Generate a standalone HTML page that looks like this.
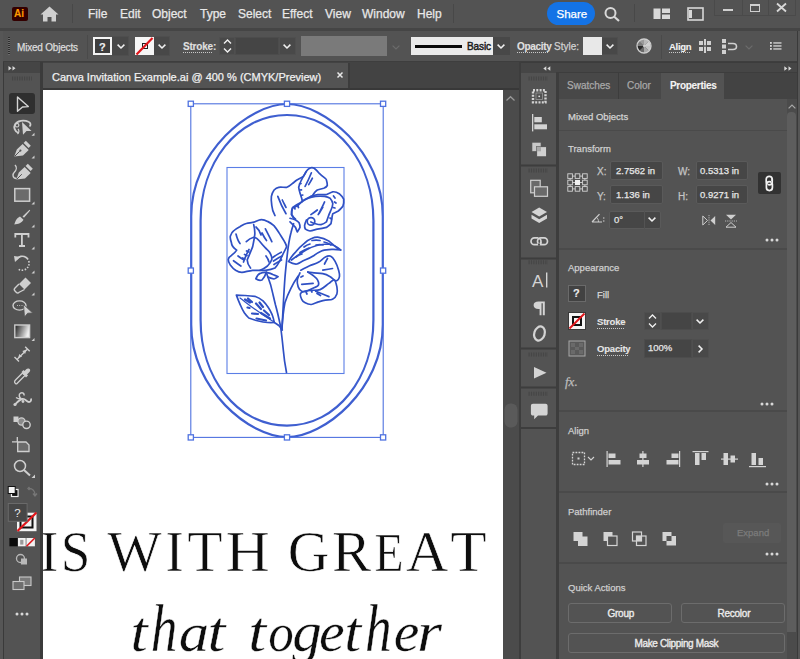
<!DOCTYPE html>
<html><head><meta charset="utf-8">
<style>
*{margin:0;padding:0;box-sizing:border-box}
html,body{width:800px;height:659px;overflow:hidden;background:#535353}
body{position:relative;font-family:"Liberation Sans",sans-serif;color:#e6e6e6}
.a{position:absolute}
.t{position:absolute;white-space:nowrap;line-height:1;-webkit-text-stroke:0.25px currentColor}
.t[style*="bold"]{-webkit-text-stroke:0.1px currentColor}
svg{position:absolute;overflow:visible}
</style></head><body>

<!-- MENU BAR -->
<div class="a" style="left:0;top:0;width:800px;height:28px;background:#535353"></div>
<div class="a" style="left:0;top:28px;width:800px;height:3px;background:#454545"></div>
<!-- Ai logo -->
<div class="a" style="left:12px;top:7px;width:16px;height:14px;background:#330000;border-radius:2px"></div>
<div class="t" style="left:14px;top:9px;font-size:10px;font-weight:bold;color:#ff9a00">Ai</div>
<!-- home -->
<svg style="left:40px;top:6px" width="19" height="16" viewBox="0 0 19 16"><path d="M9.5 0.5 L18.5 8.5 L16 8.5 L16 15.5 L11.5 15.5 L11.5 11 L7.5 11 L7.5 15.5 L3 15.5 L3 8.5 L0.5 8.5 Z" fill="#d0d0d0"/></svg>
<div class="a" style="left:72px;top:4px;width:1px;height:19px;background:#484848"></div>
<div class="t" style="left:88px;top:8px;font-size:12px;color:#e8e8e8">File</div>
<div class="t" style="left:120px;top:8px;font-size:12px;color:#e8e8e8">Edit</div>
<div class="t" style="left:152px;top:8px;font-size:12px;color:#e8e8e8">Object</div>
<div class="t" style="left:200px;top:8px;font-size:12px;color:#e8e8e8">Type</div>
<div class="t" style="left:238px;top:8px;font-size:12px;color:#e8e8e8">Select</div>
<div class="t" style="left:282px;top:8px;font-size:12px;color:#e8e8e8">Effect</div>
<div class="t" style="left:325px;top:8px;font-size:12px;color:#e8e8e8">View</div>
<div class="t" style="left:362px;top:8px;font-size:12px;color:#e8e8e8">Window</div>
<div class="t" style="left:417px;top:8px;font-size:12px;color:#e8e8e8">Help</div>
<div class="a" style="left:453px;top:4px;width:1px;height:19px;background:#484848"></div>
<!-- share -->
<div class="a" style="left:547px;top:2px;width:48px;height:23px;background:#1473e6;border-radius:12px"></div>
<div class="t" style="left:556.5px;top:8.5px;font-size:11.5px;color:#fff">Share</div>
<!-- search -->
<svg style="left:604px;top:7px" width="17" height="15" viewBox="0 0 17 15"><circle cx="6.5" cy="6" r="5" fill="none" stroke="#d8d8d8" stroke-width="2"/><path d="M10 9.5 L15 14" stroke="#d8d8d8" stroke-width="2.2"/></svg>
<div class="a" style="left:634px;top:4px;width:1px;height:18px;background:#484848"></div>
<!-- workspace icon -->
<svg style="left:653px;top:8px" width="18" height="12" viewBox="0 0 18 12"><rect x="0.5" y="0.5" width="7" height="10.5" fill="#d8d8d8"/><rect x="9" y="0.5" width="8" height="4.5" fill="#d8d8d8"/><rect x="9" y="6.5" width="8" height="4.5" fill="#d8d8d8"/></svg>
<svg style="left:687px;top:7px" width="17" height="14" viewBox="0 0 17 14"><rect x="1" y="1" width="15" height="12" fill="none" stroke="#d8d8d8" stroke-width="1.6"/><rect x="2" y="3" width="3" height="8" fill="#d8d8d8"/></svg>
<!-- window controls -->
<div class="a" style="left:714px;top:-1px;width:82px;height:17px;border:1px solid #4a4a4a"></div>
<div class="a" style="left:742px;top:0;width:1px;height:16px;background:#4a4a4a"></div>
<div class="a" style="left:768px;top:0;width:1px;height:16px;background:#4a4a4a"></div>
<div class="a" style="left:723px;top:9px;width:10px;height:2px;background:#d0d0d0"></div>
<div class="a" style="left:750px;top:4px;width:10px;height:8px;border:1.5px solid #d0d0d0;border-top-width:2px"></div>
<svg style="left:776px;top:3px" width="11" height="9" viewBox="0 0 11 9"><path d="M1 0.5 L10 8.5 M10 0.5 L1 8.5" stroke="#d8d8d8" stroke-width="1.8"/></svg>

<!-- CONTROL BAR -->
<div class="a" style="left:3px;top:31px;width:797px;height:31px;background:#535353"></div>
<div class="a" style="left:0;top:31px;width:3px;height:628px;background:#565656"></div>
<!-- grip -->
<div class="a" style="left:8px;top:37px;width:2px;height:18px;background:repeating-linear-gradient(#2e2e2e 0 1px,#6a6a6a 1px 2px)"></div>
<div class="t" style="left:17px;top:43px;font-size:10px;color:#dcdcdc;letter-spacing:-0.2px">Mixed Objects</div>
<div class="a" style="left:87px;top:35px;width:1px;height:24px;background:#4a4a4a"></div>
<!-- fill swatch -->
<div class="a" style="left:93px;top:37px;width:19px;height:18px;border:2px solid #f4f4f4;background:#3e3e3e"></div>
<div class="t" style="left:99px;top:42px;font-size:11px;font-weight:bold;color:#f0f0f0">?</div>
<div class="a" style="left:112px;top:36px;width:17px;height:20px;background:#484848;border:1px solid #4e4e4e;border-left:0"></div>
<svg style="left:117px;top:44px" width="8" height="5" viewBox="0 0 8 5"><path d="M0.6 0.6 L4 4 L7.4 0.6" fill="none" stroke="#f0f0f0" stroke-width="1.5"/></svg>
<!-- stroke swatch -->
<div class="a" style="left:135px;top:37px;width:19px;height:18px;background:#f6f6f6"></div>
<div class="a" style="left:142px;top:43px;width:6px;height:6px;border:1.5px solid #222"></div>
<svg style="left:135px;top:37px" width="19" height="18" viewBox="0 0 19 18"><path d="M1.5 17.5 L17.5 1" stroke="#e0161b" stroke-width="2.2"/></svg>
<div class="a" style="left:154px;top:36px;width:16px;height:20px;background:#484848;border:1px solid #4e4e4e;border-left:0"></div>
<svg style="left:158px;top:44px" width="8" height="5" viewBox="0 0 8 5"><path d="M0.6 0.6 L4 4 L7.4 0.6" fill="none" stroke="#f0f0f0" stroke-width="1.5"/></svg>
<!-- Stroke: -->
<div class="t" style="left:183px;top:42px;font-size:10px;font-weight:bold;color:#e0e0e0;letter-spacing:-0.2px">Stroke:</div>
<div class="a" style="left:183px;top:52px;width:30px;height:1px;background:repeating-linear-gradient(90deg,#c8c8c8 0 1px,transparent 1px 2px)"></div>
<div class="a" style="left:219px;top:37px;width:16px;height:18px;background:#494949;border:1px solid #4f4f4f"></div>
<svg style="left:223px;top:39px" width="9" height="14" viewBox="0 0 9 14"><path d="M1 4.5 L4.5 1 L8 4.5 M1 9.5 L4.5 13 L8 9.5" fill="none" stroke="#f0f0f0" stroke-width="1.4"/></svg>
<div class="a" style="left:235px;top:37px;width:44px;height:18px;background:#454545;border:1px solid #4c4c4c"></div>
<div class="a" style="left:279px;top:37px;width:17px;height:18px;background:#494949;border:1px solid #4f4f4f"></div>
<svg style="left:283px;top:44px" width="8" height="5" viewBox="0 0 8 5"><path d="M0.6 0.6 L4 4 L7.4 0.6" fill="none" stroke="#f0f0f0" stroke-width="1.5"/></svg>
<!-- profile disabled -->
<div class="a" style="left:301px;top:36px;width:86px;height:20px;background:#7a7a7a"></div>
<svg style="left:392px;top:45px" width="8" height="5" viewBox="0 0 8 5"><path d="M0.6 0.6 L4 4 L7.4 0.6" fill="none" stroke="#6c6c6c" stroke-width="1.2"/></svg>
<!-- brush -->
<div class="a" style="left:411px;top:37px;width:82px;height:18px;background:#ebebeb"></div>
<div class="a" style="left:415px;top:45px;width:47px;height:3px;background:#0a0a0a"></div>
<div class="t" style="left:467px;top:42px;font-size:10px;color:#1c1c1c;-webkit-text-stroke:0.45px #1c1c1c;letter-spacing:-0.1px">Basic</div>
<div class="a" style="left:493px;top:37px;width:17px;height:18px;background:#484848"></div>
<svg style="left:497px;top:44px" width="8" height="5" viewBox="0 0 8 5"><path d="M0.6 0.6 L4 4 L7.4 0.6" fill="none" stroke="#f0f0f0" stroke-width="1.5"/></svg>
<div class="t" style="left:517px;top:42px;font-size:10px;font-weight:bold;color:#e0e0e0;letter-spacing:-0.3px">Opacity</div>
<div class="a" style="left:517px;top:52px;width:32px;height:1px;background:repeating-linear-gradient(90deg,#c8c8c8 0 1px,transparent 1px 2px)"></div>
<div class="t" style="left:554px;top:42px;font-size:10px;color:#d0d0d0">Style:</div>
<div class="a" style="left:583px;top:37px;width:19px;height:18px;background:#e8e8e8"></div>
<div class="a" style="left:602px;top:37px;width:16px;height:18px;background:#484848;border:1px solid #4e4e4e;border-left:0"></div>
<svg style="left:606px;top:44px" width="8" height="5" viewBox="0 0 8 5"><path d="M0.6 0.6 L4 4 L7.4 0.6" fill="none" stroke="#f0f0f0" stroke-width="1.5"/></svg>
<!-- recolor wheel -->
<svg style="left:635.5px;top:37.5px" width="16" height="16" viewBox="0 0 16 16"><path d="M8 8 L8.00 1.20 A6.8 6.8 0 0 1 12.81 3.19 Z" fill="#b8b8b8"/><path d="M8 8 L12.81 3.19 A6.8 6.8 0 0 1 14.80 8.00 Z" fill="#d0d0d0"/><path d="M8 8 L14.80 8.00 A6.8 6.8 0 0 1 12.81 12.81 Z" fill="#c4c4c4"/><path d="M8 8 L12.81 12.81 A6.8 6.8 0 0 1 8.00 14.80 Z" fill="#a8a8a8"/><path d="M8 8 L8.00 14.80 A6.8 6.8 0 0 1 3.19 12.81 Z" fill="#6a6a6a"/><path d="M8 8 L3.19 12.81 A6.8 6.8 0 0 1 1.20 8.00 Z" fill="#2a2a2a"/><path d="M8 8 L1.20 8.00 A6.8 6.8 0 0 1 3.19 3.19 Z" fill="#7a7a7a"/><path d="M8 8 L3.19 3.19 A6.8 6.8 0 0 1 8.00 1.20 Z" fill="#9a9a9a"/><circle cx="8" cy="8" r="7" fill="none" stroke="#cfcfcf" stroke-width="1.3"/><circle cx="8" cy="8" r="1" fill="#ddd"/></svg>
<div class="a" style="left:661px;top:35px;width:1px;height:24px;background:#4a4a4a"></div>
<div class="t" style="left:669px;top:42px;font-size:9.5px;font-weight:bold;color:#f2f2f2;letter-spacing:-0.3px">Align</div>
<div class="a" style="left:669px;top:52px;width:21px;height:1px;background:repeating-linear-gradient(90deg,#c8c8c8 0 1px,transparent 1px 2px)"></div>
<svg style="left:698px;top:39px" width="14" height="14" viewBox="0 0 14 14"><g fill="#d0d0d0"><rect x="6" y="0" width="2" height="14"/><rect x="1" y="2" width="4" height="4"/><rect x="9" y="2" width="4" height="4"/><rect x="1" y="8" width="4" height="4"/><rect x="9" y="8" width="4" height="4"/></g><rect x="0" y="6.3" width="14" height="1.4" fill="#535353"/></svg>
<svg style="left:722px;top:39px" width="16" height="15" viewBox="0 0 16 15"><g fill="#d0d0d0"><rect x="0" y="0" width="4" height="4"/><rect x="0" y="5.5" width="4" height="4"/><rect x="0" y="11" width="4" height="4"/></g><path d="M6 4.5 L11 4.5 Q14.5 4.5 14.5 7.5 Q14.5 10.5 11 10.5 L6 10.5" fill="none" stroke="#d0d0d0" stroke-width="1.6"/></svg>
<svg style="left:745px;top:45px" width="8" height="5" viewBox="0 0 8 5"><path d="M0.6 0.6 L4 4 L7.4 0.6" fill="none" stroke="#6c6c6c" stroke-width="1.2"/></svg>
<svg style="left:770px;top:41px" width="12" height="11" viewBox="0 0 12 11"><g fill="#d8d8d8"><rect x="0" y="1" width="1.8" height="1.8"/><rect x="0" y="4" width="1.8" height="1.8"/><rect x="0" y="7" width="1.8" height="1.8"/><rect x="3.3" y="1.3" width="8.2" height="1.3"/><rect x="3.3" y="4.3" width="8.2" height="1.3"/><rect x="3.3" y="7.3" width="8.2" height="1.3"/></g></svg>

<!-- LEFT TOOLBAR -->
<div class="a" style="left:3px;top:61px;width:794px;height:2px;background:#3e3e3e"></div>
<div class="a" style="left:3px;top:62px;width:1px;height:597px;background:#3a3a3a"></div>
<div class="a" style="left:4px;top:62px;width:36px;height:11px;background:#454545"></div>
<div class="a" style="left:4px;top:73px;width:36px;height:586px;background:#535353"></div>
<div class="a" style="left:40px;top:62px;width:3px;height:597px;background:#3b3b3b"></div>


<!-- TOOLBAR ICONS -->
<svg style="left:0;top:0" width="43" height="659" viewBox="0 0 43 659">
<g fill="none" stroke="#cdcdcd" stroke-width="1.4" stroke-linejoin="round" stroke-linecap="round">
</g>
<!-- header >> -->
<path d="M8.5 66 L11.5 68.3 L8.5 70.6 Z M12.5 66 L15.5 68.3 L12.5 70.6 Z" fill="#d8d8d8"/>
<path d="M12 78.6 H32" stroke="#464646" stroke-width="4" stroke-dasharray="1.2 1.2"/>
<!-- selection -->
<rect x="9" y="93" width="26" height="21" rx="3" fill="#2f2f2f"/>
<path d="M17.5 97 L28.3 106.6 L22.5 107 L17.5 111.3 Z" fill="none" stroke="#d4d4d4" stroke-width="1.4" stroke-linejoin="round"/>
<!-- lasso -->
<path d="M18.5 133 C14.5 131.5 13.5 127 15 124.5 C17 120.5 24 119.5 28.5 121.8 C31 123 31 125.5 29.5 126.5" fill="none" stroke="#cfcfcf" stroke-width="1.8"/>
<path d="M17 127 a1.8 1.8 0 1 1 0.1 0 M18 129 C19.5 130.5 19 133 17.5 134" fill="none" stroke="#cfcfcf" stroke-width="1.2"/>
<path d="M22 122 L31.5 131 L26.5 131 L23 134.8 Z" fill="#d0d0d0"/>
<path d="M34.5 132.8 V135.8 H31.5 Z" fill="#d0d0d0"/>
<!-- pen -->
<path d="M14.3 156.6 L16.8 149.5 L22.6 143.9 L28.7 150 L23 155.4 Z" fill="#cfcfcf"/>
<path d="M23.6 143 L25.8 140.8 L30.8 145.8 L28.6 148 Z" fill="#cfcfcf"/>
<path d="M14.8 156.2 L19.8 151.2" stroke="#535353" stroke-width="1"/>
<circle cx="20.4" cy="150.6" r="1.1" fill="#535353"/>
<path d="M34.5 155.5 V158.5 H31.5 Z" fill="#d0d0d0"/>
<!-- curvature -->
<path d="M16.3 179.6 L18.8 172.5 L24.6 166.9 L30.7 173 L25 178.4 Z" fill="#cfcfcf"/>
<path d="M25.6 166 L27.8 163.8 L32.8 168.8 L30.6 171 Z" fill="#cfcfcf"/>
<path d="M16.8 179.2 L21.8 174.2" stroke="#535353" stroke-width="1"/>
<path d="M16.5 178.5 C12 178 12.5 174 14.5 172 C16.5 170 17 167 15 165" fill="none" stroke="#cfcfcf" stroke-width="1.4"/>
<!-- rectangle -->
<rect x="14.8" y="188.6" width="14.8" height="12.6" fill="#6b6b6b" stroke="#cdcdcd" stroke-width="1.5"/>
<path d="M34.5 201.5 V204.5 H31.5 Z" fill="#d0d0d0"/>
<!-- brush -->
<path d="M22.5 216.5 L29.5 209.8 L30.2 210.5 L24 217.8 Z" fill="#cfcfcf"/>
<path d="M14.3 224.5 C15.5 221 16.5 218 20 216.5 L23.5 219.8 C22 223 18 224.3 14.3 224.5 Z" fill="#cfcfcf"/>
<path d="M34.5 224.5 V227.5 H31.5 Z" fill="#d0d0d0"/>
<!-- type -->
<path d="M15.3 237.5 V234 H28.5 V237.5 M21.9 234 V246 M19 246 H25" fill="none" stroke="#d0d0d0" stroke-width="1.8"/>
<path d="M34.5 246.5 V249.5 H31.5 Z" fill="#d0d0d0"/>
<!-- rotate -->
<path d="M16.2 259.5 A7 7 0 1 1 17.5 268.5" fill="none" stroke="#cfcfcf" stroke-width="1.6" stroke-dasharray="14 1.5 1.5 1.5 1.5 1.5 1.5 1.5 1.5 1.5 1.5 1.5 1.5 1.5"/>
<path d="M14 256 L20.5 257 L15 262 Z" fill="#cfcfcf"/>
<path d="M34.5 270.5 V273.5 H31.5 Z" fill="#d0d0d0"/>
<!-- eraser -->
<path d="M21.5 281.5 L25.5 277.5 L31 283 L24.5 289.5 L19 284 Z" fill="#cfcfcf"/>
<path d="M19 284 L15 288 C14 289 14 290 15 291 L16.2 292.2 C17.2 293.2 18.2 293.2 19.2 292.2 L24.5 289.5" fill="none" stroke="#cfcfcf" stroke-width="1.4"/>
<path d="M34.5 292.5 V295.5 H31.5 Z" fill="#d0d0d0"/>
<!-- shape builder -->
<ellipse cx="19.5" cy="305.5" rx="6.5" ry="4.6" fill="none" stroke="#cfcfcf" stroke-width="1.4"/>
<path d="M17 305.5 h0.8 M19.3 305.5 h0.8 M21.6 305.5 h0.8" stroke="#cfcfcf" stroke-width="1.2"/>
<path d="M23.5 304.5 L32.7 313 L27.7 313.2 L24.5 317 Z" fill="#d0d0d0" stroke="#535353" stroke-width="0.8"/>
<!-- gradient -->
<defs><linearGradient id="gr" x1="0" y1="0" x2="1" y2="0.3"><stop offset="0" stop-color="#1a1a1a"/><stop offset="1" stop-color="#f0f0f0"/></linearGradient></defs>
<rect x="14.8" y="325" width="14.8" height="12.6" fill="url(#gr)" stroke="#cdcdcd" stroke-width="1.4"/>
<path d="M34.5 338 V341 H31.5 Z" fill="#d0d0d0"/>
<!-- width -->
<path d="M14.5 357 L19 361.5 M25.2 346.8 L29.7 351.3 M17.5 359 L27.5 349" stroke="#cfcfcf" stroke-width="1.4"/>
<path d="M18.2 357.8 L22.1 356.7 L19.3 353.9 Z M26.5 349.6 L25.1 353.9 L22.3 351.1 Z" fill="#cfcfcf"/>
<!-- eyedropper -->
<path d="M15.5 383.5 C14 382.5 14.5 381 15.5 380 L22.5 373 L25 375.5 L18 382.5 C17 383.5 16.5 384.5 15.5 383.5 Z" fill="none" stroke="#cfcfcf" stroke-width="1.3"/>
<path d="M21.5 372 L23.5 370 L24.5 371 L26.5 369 C27.5 368 29.5 368.5 30 369.5 C30.5 370.5 30 371.5 29 372.5 L27 374.5 L28 375.5 L26 377.5 Z" fill="#cfcfcf"/>
<!-- puppet warp -->
<path d="M15 404.5 C17.5 402 19.5 399.5 22.5 399 C25.5 398.5 26.5 402 29 402 C30.5 402 31.5 400.5 31 398.5" fill="none" stroke="#cfcfcf" stroke-width="1.8"/>
<path d="M21.5 399 C19 397.5 18.5 394.5 20.5 393.2 C22.5 392 24.5 393.5 24 395.5 M16 397.5 C17.5 398.5 19 399 20.5 399" fill="none" stroke="#cfcfcf" stroke-width="1.5"/>
<circle cx="15" cy="404.5" r="1.6" fill="#cfcfcf"/><circle cx="23" cy="401.5" r="1.4" fill="#cfcfcf"/>
<!-- symbol -->
<rect x="13.5" y="416.5" width="5" height="5.5" fill="#cfcfcf"/>
<circle cx="21.5" cy="421.5" r="3.6" fill="#8a8a8a" stroke="#cfcfcf" stroke-width="1.2"/>
<circle cx="26.5" cy="424.8" r="3.7" fill="#535353" stroke="#cfcfcf" stroke-width="1.4"/>
<!-- artboard -->
<path d="M12 441.8 H17.5 M17.3 437 V442" stroke="#cfcfcf" stroke-width="1.3"/>
<path d="M17.7 442 H26 L29 445 V451.5 H17.7 Z" fill="#6b6b6b" stroke="#cfcfcf" stroke-width="1.3"/>
<!-- zoom -->
<circle cx="20" cy="466" r="5.5" fill="none" stroke="#cfcfcf" stroke-width="1.5"/>
<path d="M24 470 L30 475.5" stroke="#cfcfcf" stroke-width="2"/>
<path d="M35 474.5 V478 H31.5 Z" fill="#d0d0d0"/>
<!-- default fill stroke -->
<rect x="11.5" y="489.5" width="6.5" height="7" fill="none" stroke="#f0f0f0" stroke-width="1.2"/>
<rect x="12.3" y="490.3" width="5" height="5.5" fill="#111"/>
<rect x="8.2" y="486.5" width="7" height="7" fill="#f4f4f4" stroke="#111" stroke-width="1"/>
<path d="M29 488.5 C32.5 488.5 35 491 35 495 M33 493.5 L35 496 L37 493.5 M29.5 487 L28 488.5 L29.5 490" fill="none" stroke="#777" stroke-width="1.3"/>
<!-- fill/stroke big -->
<rect x="17" y="512.7" width="19.5" height="18.5" fill="#f4f4f4"/>
<rect x="20.5" y="516.5" width="12" height="11" fill="none" stroke="#111" stroke-width="2"/>
<path d="M17.5 531 L36.5 512.5" stroke="#e0161b" stroke-width="2.3"/>
<rect x="8.3" y="503.5" width="18.8" height="17.8" fill="#474747" stroke="#6a6a6a" stroke-width="1"/>
<text x="14.3" y="517.3" font-family="Liberation Sans" font-size="11.5" fill="#ececec">?</text>
<!-- color modes -->
<rect x="9.4" y="538" width="8.5" height="8.3" fill="#0c0c0c"/>
<rect x="17.9" y="538" width="7.8" height="8.3" fill="#f2f2f2"/>
<rect x="20.2" y="539.8" width="3.2" height="4.8" fill="#9a9a9a"/>
<rect x="26.4" y="538" width="8.5" height="8.3" fill="#f2f2f2"/>
<path d="M26.6 546.2 L34.8 538" stroke="#e0161b" stroke-width="1.6"/>
<!-- draw mode -->
<circle cx="20.5" cy="558.5" r="4" fill="none" stroke="#b8b8b8" stroke-width="1.3"/>
<rect x="21" y="558.5" width="6" height="6" fill="#b8b8b8"/>
<!-- screen mode -->
<rect x="19.5" y="577" width="11.5" height="8.5" fill="#7a7a7a" stroke="#c8c8c8" stroke-width="1.1"/>
<rect x="13" y="581.5" width="11" height="8" fill="#6e6e6e" stroke="#c8c8c8" stroke-width="1.1"/>
<!-- more -->
<circle cx="17" cy="614" r="1.5" fill="#d8d8d8"/><circle cx="22" cy="614" r="1.5" fill="#d8d8d8"/><circle cx="27" cy="614" r="1.5" fill="#d8d8d8"/>
</svg>

<!-- DOC TAB BAR -->
<div class="a" style="left:43px;top:62px;width:477px;height:28px;background:#434343"></div>
<div class="a" style="left:43px;top:63px;width:305px;height:25px;background:#535353"></div>
<div class="a" style="left:348px;top:63px;width:2px;height:25px;background:#3c3c3c"></div>
<div class="a" style="left:43px;top:88px;width:477px;height:2px;background:#383838"></div>
<div class="t" style="left:52px;top:72px;font-size:11px;color:#f0f0f0">Canva Invitation Example.ai @ 400 % (CMYK/Preview)</div>
<svg style="left:337px;top:72px" width="6" height="6" viewBox="0 0 6 6"><path d="M0.5 0.5 L5.5 5.5 M5.5 0.5 L0.5 5.5" stroke="#e8e8e8" stroke-width="1.5"/></svg>

<!-- CANVAS -->
<div class="a" style="left:43px;top:90px;width:460px;height:569px;background:#ffffff"></div>

<!-- ARTWORK -->
<div class="a" style="left:43px;top:90px;width:460px;height:569px;overflow:hidden">
<svg style="left:-43px;top:-90px" width="800" height="659" viewBox="0 0 800 659">
<g fill="none" stroke="#3f5fd0" stroke-width="2.2">
<path d="M287 104 C250.3 104 191.2 151.4 191.2 216.2 L191.2 324.8 C191.2 389.8 250.3 437.2 287 437.2 C323.7 437.2 382.8 389.8 382.8 324.8 L382.8 216.2 C382.8 151.4 323.7 104 287 104 Z"/>
<path d="M287 115 C236.7 115 200.6 163.4 200.6 220.7 L200.6 319.9 C200.6 377.2 236.7 425.6 287 425.6 C337.3 425.6 373.4 377.2 373.4 319.9 L373.4 220.7 C373.4 163.4 337.3 115 287 115 Z"/>
</g>
<rect x="227" y="167.5" width="117" height="206" fill="none" stroke="#5b7ee6" stroke-width="1.1"/>
<g fill="none" stroke="#2f50c4" stroke-width="1.7" stroke-linejoin="round" stroke-linecap="round">
<!-- upper flower outer big petal -->
<path d="M275 215.6 C273 212 272 208.5 271.8 205.5 C271.2 202 271 199 271.4 196.4 C272 193.5 273 191.5 274.1 190 C275.5 188.5 277 187.6 278.7 187.3 C281.5 187 284 187.5 286.9 187.3 C289 186.5 290.8 185 292.3 183.7 C294 182.3 295.5 181 296.9 180 C299 178.8 301.5 177.8 303.3 176.4 C304.5 175 305.2 173.3 306 171.8 C307 170.3 308.2 169 309.6 168.2 C311 167.6 312.8 167.6 314.2 168.2 C316 169.5 318 171.8 319.6 173.7 C321.5 175.5 323.5 177 325 178.2 C326 179 326.5 179.6 326.4 180 C327 182 327.5 184 327.3 185.5 C326.5 187 325 187.8 323.7 188.2 C321.5 188.8 319.3 189.4 317.3 190 C315.8 191 314.5 192.5 313.7 193.7 C313 194.8 312.4 195.6 311.9 196.4"/>
<path d="M306 171.8 C304.5 174.5 302.8 177.3 301.4 180 C300.2 182.5 299.2 185 298.7 187.3 C299 190 299.8 192.3 300.5 194.6 C301.2 196.8 302 199 302.3 201 C300.8 202.8 299.3 204.3 297.8 205.5 C296 206.6 294 207.4 292.3 208.3 C291.5 210.5 291.2 212.5 291.4 214.6 C292.3 216.5 293.5 218 295.1 219.2"/>
<path d="M311.4 172.8 C309.5 177.5 307.5 182 305.1 186.4 M312.4 178.2 C311.3 180.5 310 182.6 308.7 184.6 M277.8 196.4 C280 202.5 282.8 208.3 286 213.7 M282.3 200 C283.5 202.5 284.8 205 286 207.4 M299.5 184 L301 183.5 M299.8 190 L301.5 189.8 M301 195.5 L302.8 195 M294.5 207 L295 209 M297.5 205.5 L298.5 207.5"/>
<!-- upper right petal -->
<path d="M302.3 201 C305 199.5 307.8 197.8 310.5 196.4 C313 195.4 315.5 194.8 317.8 194.6 C320.5 194.5 323.5 194.6 326.4 194.6 C328.5 193.6 330.7 192.5 332.8 191.8 C335 191.6 337.2 192.3 339.2 193.7 C341 195.3 342.8 197.2 343.7 199.1 C344 201.5 343.6 204 342.8 206.4 C341.5 208 340 209.6 338.3 211 C336.5 212 334.5 213 332.8 213.7 C332.3 215.2 332 216.8 331.9 218.3 C331.6 220 331.3 222 331 223.7 C329.8 225 328.2 226.4 326.4 227.4 C323.5 228.2 320.3 228.8 317.3 229.2 C314.8 229.8 312.3 230.6 310 231 C308.3 230.8 306.7 230.2 305.5 229.2 C304.8 228 304.5 226.8 304.6 225.5 C305 223.5 305.6 221.7 306.4 220"/>
<path d="M301.8 201.9 C303.8 200.5 306 199.2 308.2 198.2 C310.5 197.3 313 196.7 315.5 196.4 C318.5 196.2 321.5 196.2 324.6 196.4 C326.5 196.8 328.5 197.4 330.1 198.2 C331.5 199.8 332.5 201.8 332.8 203.7 C332.6 206 331.9 208 331 210 C330 212.2 329 214.3 328.3 216.4 C327.7 218.2 327 220.2 326.4 221.9 C324.8 223.2 323 224.2 321 224.6 C319.2 224.6 317.3 224.3 315.5 223.7 C314 223.2 312.4 222.6 310.9 221.9"/>
<path d="M301.8 201.9 C298.5 203.5 295.3 205.3 292.7 207.3 C292 209.7 291.7 212.2 291.8 214.6 C292.8 216.3 294 217.8 295.5 219.2"/>
<circle cx="311" cy="221.4" r="3.8"/>
<path d="M324.6 201.9 C322.5 206.2 320.5 210.4 318.2 214.6 M322.8 207.3 C321.5 209.5 320.3 211.5 319.1 213.7 M317.3 210 C315 211.8 313 213.2 310.9 214.6 M333.5 196 L335 198 M334.5 202 L336 203 M333.2 207.5 L335 208 M330 218 L331.5 219"/>
<!-- upper sepal -->
<path d="M290 218.3 C292 218.8 293.8 219.3 295.5 220 C297 220.8 298.3 221.8 299.1 222.8 C299.8 224.3 300.1 225.8 300 227.4 C299.2 229 298.3 230.5 297.3 231.9 C296.6 230.3 296 228.8 295.5 227.4 C293.8 225.6 291.9 223.7 290 221.9"/>
<!-- left flower outer -->
<path d="M236.7 250.1 C233.5 248 231.5 245 231.4 242.6 C230.5 240 230 238 230.3 236.3 C231 234 232 232 233.5 231 C235.5 229 237.5 228 239.9 226.7 C242 225.5 244 224 246.3 223.5 C248.5 223 250.5 222.8 252.6 222.4 C255 222 257.5 220.5 260.1 219.8 C262.5 219.5 265 220 267.5 221.4 C270 222.5 272 224 273.9 225.6 C276 228 277.5 230.5 279.2 233.1 C281 236 283 239 284.5 241.6 C285.5 243.5 286.5 245 286.6 246.9 C285.5 249.5 283.5 252.5 282.4 255.4 C281 258 280.5 260 279.2 261.8 C278 264 276.5 266.5 274.9 268.1 C272 269.5 268.5 270 265.4 270.3 C261 270.5 257 270.2 252.6 270.3 C249 270.8 245 272 242 272.4 C239.5 272.5 237.5 271.5 235.6 270.3 C233 268.5 231.5 266.5 230.3 264.9 C229 263 228.2 261.5 228.2 259.6 C228.5 257.5 229.5 256.5 231.4 255.4 C233.5 254 235.5 252 236.7 250.1 Z"/>
<path d="M246.3 241.6 C248.5 239.5 251 238 253.7 237.3 C255.5 237.2 257.5 238.5 259 240.5 C261 243 263 245.5 265.4 247.9 C267 249.5 268.5 250.5 269.6 252.2 C271 254.5 272 257 271.8 259.6 C271 262 269.5 264 267.5 266 C265 268 262.5 269.5 260.1 270.3"/>
<path d="M253.7 224.6 C254.5 228 255 231 254.8 234.1 C254.5 238 253.5 242.5 252.6 246.9 C251 251 249 255.5 247.3 259.6 C247 262.5 248.5 265.5 250.5 268.1"/>
<path d="M233.5 260.7 C236 262.5 238.5 264.5 240.9 266 M238 256 C240 257.5 242 259 244 260 M243.5 262 C245 258 247 253 249 249.5 M242.5 258 L245 259 M244.5 254.5 L247 255.5 M246.5 251 L249 252 M265.4 228.8 C267.5 233 270 237.5 271.8 241.6 M262 233 C263.5 236 265 238.5 266.5 240.5 M266 256 C267.5 258 268.5 260 269 262 M272.8 257.5 C275.5 255.5 278.5 253.5 281.3 252.2 M273.5 261 C276.5 259 279.5 257 282 256 M274 264.5 C277 262.5 279.5 261 281.5 260 M236 234 C237 238 238 241 240 243.5 M256 227 C258.5 229 260 232 261 235"/>
<!-- left sepals -->
<path d="M255.8 278.8 C257 276 258.5 274 260.1 273.4 C262 272.5 264.5 272.2 266.4 272.4 C265.5 275 264 278 262 280 C260 280.8 257.5 280 255.8 278.8 Z"/>
<path d="M266.4 272.4 C269 273 271 273.5 272.8 274.5 C275 275.5 277 276 278.1 276.7 C276.5 278 275 279 274 279 C271.5 278.5 269.5 277.8 268 277"/>
<!-- stems -->
<path d="M293.6 223.7 C292.5 227 291.6 230 290.9 233 C289 240 288 248 287.3 254.3 C286.5 262 285.5 270 284.9 278.5 C284 290 283 310 282 329"/>
<path d="M266.4 272.4 C267.5 276 269 280 270.7 285.1 C272.5 292 274 299 275.5 305 C277.5 312 279 319 280.5 326 C281.5 333 282.5 342 283.3 350 C284 358 285 365 286.5 372.5"/>
<path d="M298.2 276.1 C295.5 280 293 284 290.9 288.3 C288.5 293 286.5 298 284.9 302.8 C283.5 310 282.5 320 281.8 329"/>
<!-- upper right leaf -->
<path d="M288.5 261.6 C290.5 258 293 254.5 295.8 251.8 C298.5 248.5 301.5 245.5 304.3 243.3 C306.5 241 309 239.5 311.6 238.5 C314 237.5 316.5 237 318.8 237.3 C322 237.7 325.5 239 328.5 240.9 C330.5 242.5 332.5 244 334.6 245.8 C336.5 247.5 338.5 249 340.7 250 C338 249.6 335 249.3 332.2 249.4 C329 249.6 325.5 249.8 322.5 250.6 C319.5 252 316.5 253.5 314 255.5 C311 257.5 307.5 259 304.3 260.3 C301.5 261.5 299.5 263 297 264 C294 264.5 291 263 288.5 261.6 Z"/>
<path d="M291.5 260 C296 256.5 301 253 306 250 C313 246 320 244 328 244 C333 244.5 337 246.5 340.7 250"/>
<path d="M304 247 C306 245.5 308 244.5 310 244 M300 252.5 C303 250.5 306 249 309 248 M312 240.5 C315 240 317.5 240 320 240.5 M316 245 C318.5 244.5 321 244.5 323 245 M324 242 C326.5 242.5 329 243.5 331 245 M296 257 C298 255.5 300 254.5 302 254"/>
<!-- lower right flower -->
<path d="M300.8 270.2 C302.3 269.5 306.7 267.1 309.6 265.8 C312.5 264.5 315.8 263.8 318.4 262.3 C321.0 260.8 323.3 258.0 325.4 257.0 C327.4 256.0 329.1 255.5 330.7 256.2 C332.3 256.9 333.8 259.1 335.1 261.4 C336.4 263.7 337.9 267.7 338.6 270.2 C339.3 272.7 339.9 274.6 339.5 276.4 C339.1 278.2 337.6 280.8 336.0 280.8 C334.4 280.8 332.0 277.6 329.8 276.4 C327.6 275.2 325.4 274.3 322.8 273.7 C320.2 273.1 316.5 273.2 314.0 272.9 C311.5 272.6 308.8 272.1 307.8 272.0"/>
<path d="M307.8 272.0 C308.7 272.6 311.5 274.2 313.1 275.5 C314.7 276.8 316.6 278.3 317.5 279.9 C318.4 281.5 319.0 283.9 318.4 285.2 C317.8 286.5 315.8 286.9 314.0 287.8 C312.2 288.7 309.9 289.9 307.8 290.5 C305.8 291.1 303.3 291.9 301.7 291.3 C300.1 290.7 298.9 288.8 298.2 286.9 C297.5 285.0 297.0 282.2 297.3 279.9 C297.6 277.6 299.5 274.1 299.9 272.9"/>
<path d="M300.8 293.1 C302.1 291.6 306.4 291.1 309.6 290.5 C312.8 289.9 316.9 290.8 320.1 289.6 C323.3 288.4 326.5 285.0 328.9 283.4 C331.2 281.8 332.9 279.3 334.2 279.9 C335.5 280.5 336.4 284.5 336.9 286.9 C337.3 289.2 337.6 291.9 336.9 294.0 C336.2 296.1 334.4 298.3 332.5 299.3 C330.6 300.3 327.8 299.7 325.4 300.1 C323.0 300.5 320.8 301.2 318.4 301.9 C316.0 302.6 313.5 304.4 311.3 304.5 C309.1 304.6 306.8 303.7 305.2 302.8 C303.6 301.9 302.4 300.9 301.7 299.3 C301.0 297.7 299.5 294.6 300.8 293.1 Z"/>
<path d="M301.7 284.3 C305.5 284 309.3 283.7 313.1 283.4 M315.7 291.3 C320 293 324.5 294.8 328.9 296.6 M322.8 270.2 C326 269.6 329.3 269 332.5 268.5 M324.5 264 C325.5 262 326.5 260 327.5 258.5 M317 293.5 L320.5 295.5 M301 277 L303 276 M311 290 L312 292 M306 292 L307 294"/>
<!-- lower left leaf -->
<path d="M236.4 295.1 C239.5 295.3 242.3 295.4 245 295.5 C248.3 295.7 251.6 295.9 254.8 296.3 C257.8 297.3 260.6 298.9 263 300.8 C265 302.8 266.8 305.1 268.3 307.5 C269.8 309.7 271 312 272 314.3 C273 317 273.8 319.7 274.3 322.5 C272 322.6 269.7 322.6 267.5 322.5 C264.5 322.2 261.5 321.7 258.5 321 C255.2 320.2 252 319.2 248.8 318 C247.1 316.4 245.6 314.6 244.3 312.8 C242.8 310.4 241.5 307.8 240.5 305.3 C239 302 237.6 298.6 236.4 295.1 Z"/>
<path d="M274.3 322.5 C275.9 323.4 277.4 324.4 278.8 325.5 C280.1 326.9 281.3 328.4 282.3 330"/>
<path d="M240 298 C248 304 256 311 274 322" stroke-width="1.2"/>
<g stroke-width="2.2"><path d="M245 299.5 L250 302.5 M248 298.5 L252 302 M256 303.5 L261 309 M259.5 302.5 L263 307 M261 313 L270 318.5 M264 310.5 L269 315 M252 313.5 L258 314 M247.5 307.5 L249.5 308 M256.5 318.5 L266 320.5"/></g>
</g>
<g font-family="Liberation Serif" font-size="56" fill="#0d0d0d" stroke="#fff" stroke-width="0.6">
<text transform="translate(49.00 570.5) scale(0.995 1)" x="-9.35" y="0">I</text>
<text transform="translate(75.75 570.5) scale(0.949 1)" x="-15.71" y="0">S</text>
<text transform="translate(134.45 570.5) scale(1.027 1)" x="-26.40" y="0">W</text>
<text transform="translate(174.50 570.5) scale(0.995 1)" x="-9.35" y="0">I</text>
<text transform="translate(204.95 570.5) scale(1.032 1)" x="-17.14" y="0">T</text>
<text transform="translate(247.65 570.5) scale(1.095 1)" x="-20.22" y="0">H</text>
<text transform="translate(308.70 570.5) scale(1.027 1)" x="-20.50" y="0">G</text>
<text transform="translate(352.30 570.5) scale(1.048 1)" x="-19.46" y="0">R</text>
<text transform="translate(388.55 570.5) scale(0.850 1)" x="-16.52" y="0">E</text>
<text transform="translate(427.35 570.5) scale(1.046 1)" x="-20.30" y="0">A</text>
<text transform="translate(468.60 570.5) scale(1.066 1)" x="-17.14" y="0">T</text>
<text transform="translate(141.12 650.5) scale(1.107 1)" x="-9.58" y="0" font-style="italic" stroke-width="0.35">t</text>
<text transform="translate(164.00 650.5) scale(0.952 1.19)" x="-13.83" y="0" font-style="italic" stroke-width="0.35">h</text>
<text transform="translate(193.62 650.5) scale(1.085 1)" x="-13.78" y="0" font-style="italic" stroke-width="0.35">a</text>
<text transform="translate(218.50 650.5) scale(1.150 1)" x="-9.58" y="0" font-style="italic" stroke-width="0.35">t</text>
<text transform="translate(259.25 650.5) scale(1.150 1)" x="-9.58" y="0" font-style="italic" stroke-width="0.35">t</text>
<text transform="translate(281.00 650.5) scale(0.913 1)" x="-14.00" y="0" font-style="italic" stroke-width="0.35">o</text>
<text transform="translate(306.12 650.5) scale(1.054 1)" x="-13.22" y="0" font-style="italic" stroke-width="0.35">g</text>
<text transform="translate(332.00 650.5) scale(1.030 1)" x="-12.66" y="0" font-style="italic" stroke-width="0.35">e</text>
<text transform="translate(354.75 650.5) scale(1.090 1)" x="-9.58" y="0" font-style="italic" stroke-width="0.35">t</text>
<text transform="translate(378.25 650.5) scale(0.952 1.19)" x="-13.83" y="0" font-style="italic" stroke-width="0.35">h</text>
<text transform="translate(406.75 650.5) scale(1.030 1)" x="-12.66" y="0" font-style="italic" stroke-width="0.35">e</text>
<text transform="translate(430.75 650.5) scale(1.145 1)" x="-12.12" y="0" font-style="italic" stroke-width="0.35">r</text>
</g>
<!-- bbox -->
<g fill="none" stroke="#4f72e0" stroke-width="1.1">
<rect x="190.8" y="103.8" width="192.4" height="333.6"/>
</g>
<g fill="#ffffff" stroke="#4f72e0" stroke-width="1.3"><rect x="188.2" y="101.2" width="5.2" height="5.2"/><rect x="188.2" y="268.0" width="5.2" height="5.2"/><rect x="188.2" y="434.8" width="5.2" height="5.2"/><rect x="284.4" y="101.2" width="5.2" height="5.2"/><rect x="284.4" y="434.8" width="5.2" height="5.2"/><rect x="380.5" y="101.2" width="5.2" height="5.2"/><rect x="380.5" y="268.0" width="5.2" height="5.2"/><rect x="380.5" y="434.8" width="5.2" height="5.2"/></g>
</svg>

</div>

<!-- canvas scrollbar -->
<div class="a" style="left:503px;top:90px;width:16px;height:569px;background:#4b4b4b"></div>
<svg style="left:506px;top:96px" width="9" height="5" viewBox="0 0 9 5"><path d="M0.5 4.5 L4.5 0.7 L8.5 4.5" fill="none" stroke="#9a9a9a" stroke-width="1.2"/></svg>
<div class="a" style="left:519px;top:62px;width:2px;height:597px;background:#3d3d3d"></div>

<!-- ICON STRIP -->
<div class="a" style="left:521px;top:62px;width:276px;height:11px;background:#464646"></div>
<div class="a" style="left:521px;top:62px;width:276px;height:1px;background:#3c3c3c"></div>
<div class="a" style="left:556px;top:72px;width:241px;height:1px;background:#3d3d3d"></div>
<div class="a" style="left:521px;top:73px;width:35px;height:586px;background:#535353"></div>
<div class="a" style="left:556px;top:73px;width:3px;height:586px;background:#3d3d3d"></div>


<!-- icon strip contents -->
<svg style="left:0;top:0" width="800" height="659" viewBox="0 0 800 659">
<path d="M550.3 66.3 L547.3 68.5 L550.3 70.7 Z M546.3 66.3 L543.3 68.5 L546.3 70.7 Z" fill="#d8d8d8"/>
<path d="M788.5 66.3 L791.5 68.5 L788.5 70.7 Z M784.3 66.3 L787.3 68.5 L784.3 70.7 Z" fill="#d8d8d8"/>
<g stroke="#3d3d3d" stroke-width="2"><path d="M521 165.5 H556 M521 258.5 H556 M521 348.5 H556 M521 387.5 H556 M521 428 H556"/></g>
<g stroke="#464646" stroke-width="4" stroke-dasharray="1.2 1.2"><path d="M528.5 78.4 H548 M528.5 170.6 H548 M528.5 262.2 H548 M528.5 354.6 H548 M528.5 393.8 H548"/></g>
<!-- artboard select dotted square -->
<rect x="533" y="90.2" width="12.5" height="12.2" fill="none" stroke="#d4d4d4" stroke-width="2.4" stroke-dasharray="2 1.3"/>
<rect x="536" y="93" width="6.5" height="6.5" fill="none" stroke="#9a9a9a" stroke-width="0.8"/>
<circle cx="539.2" cy="96.3" r="0.9" fill="#e0e0e0"/>
<!-- align -->
<rect x="532" y="114" width="1.3" height="17.4" fill="#d4d4d4"/>
<rect x="534.3" y="117" width="7.5" height="5.3" fill="#d4d4d4"/>
<rect x="534.3" y="124.3" width="12.7" height="5" fill="#d4d4d4"/>
<!-- transform squares -->
<rect x="532" y="142.3" width="9" height="9" fill="#c8c8c8" stroke="#5a5a5a" stroke-width="0.6"/>
<rect x="536.6" y="146.6" width="10" height="10.2" fill="#d0d0d0" stroke="#535353" stroke-width="1"/>
<rect x="536.6" y="146.6" width="4.4" height="4.7" fill="#a8a8a8"/>
<!-- artboards -->
<rect x="530.7" y="180.3" width="9.5" height="12.5" fill="#6a6a6a" stroke="#cfcfcf" stroke-width="1.2"/>
<rect x="534.5" y="186.8" width="13" height="9.5" fill="#6a6a6a" stroke="#cfcfcf" stroke-width="1.2"/>
<!-- layers -->
<path d="M539.2 207.5 L547 212 L539.2 216.5 L531.5 212 Z" fill="#d4d4d4"/>
<path d="M531.5 214.8 L539.2 219.3 L547 214.8 V218.4 L539.2 222.9 L531.5 218.4 Z" fill="#d4d4d4"/>
<!-- links -->
<rect x="531" y="237.8" width="10" height="6.8" rx="3.4" fill="none" stroke="#d4d4d4" stroke-width="1.7"/><path d="M539.5 237 V239" stroke="#535353" stroke-width="2"/><rect x="537.5" y="237.8" width="10" height="6.8" rx="3.4" fill="none" stroke="#d4d4d4" stroke-width="1.7"/><path d="M539 243.5 V245.5" stroke="#535353" stroke-width="2"/><path d="M540.8 242 V244.6" stroke="#d4d4d4" stroke-width="1.7"/>
<!-- A| -->
<text x="532" y="287.3" font-family="Liberation Sans" font-size="17" fill="#d4d4d4">A</text>
<rect x="546" y="272.5" width="1.4" height="15" fill="#d4d4d4"/>
<!-- pilcrow -->
<path d="M538.5 301.5 H544.8 V315.3 H542.8 V303.3 H541.5 V315.3 H539.6 V309 H538.5 C535.5 309 533.6 307.5 533.6 305.2 C533.6 302.8 535.5 301.5 538.5 301.5 Z" fill="#d4d4d4"/>
<!-- italic O glyph -->
<ellipse cx="539.5" cy="333.5" rx="5.2" ry="7.2" transform="rotate(18 539.5 333.5)" fill="none" stroke="#d4d4d4" stroke-width="2.2"/>
<!-- play -->
<path d="M534 367 L546.5 372.7 L534 378.5 Z" fill="#d4d4d4"/>
<!-- comment -->
<path d="M533 403.8 H545.5 C546.8 403.8 547.6 404.6 547.6 405.9 V413.5 C547.6 414.8 546.8 415.6 545.5 415.6 H538 L534.2 419.2 V415.6 H533 C531.7 415.6 530.9 414.8 530.9 413.5 V405.9 C530.9 404.6 531.7 403.8 533 403.8 Z" fill="#d4d4d4"/>
<!-- canvas scrollbar thumb -->
<rect x="504.5" y="403.5" width="13" height="24" rx="6" fill="#5a5a5a"/>
</svg>

<!-- PROPERTIES PANEL -->
<div class="a" style="left:559px;top:73px;width:238px;height:26px;background:#434343"></div>
<div class="a" style="left:559px;top:73px;width:59px;height:26px;background:#484848"></div>
<div class="a" style="left:618px;top:73px;width:1px;height:26px;background:#3d3d3d"></div>
<div class="a" style="left:619px;top:73px;width:42px;height:26px;background:#484848"></div>
<div class="a" style="left:661px;top:73px;width:63px;height:26px;background:#535353"></div>
<div class="t" style="left:567px;top:81px;font-size:10px;color:#a8a8a8">Swatches</div>
<div class="t" style="left:627px;top:81px;font-size:10px;color:#a8a8a8">Color</div>
<div class="t" style="left:670px;top:81px;font-size:10px;font-weight:bold;color:#f4f4f4;letter-spacing:-0.3px">Properties</div>
<div class="a" style="left:559px;top:99px;width:238px;height:560px;background:#535353"></div>
<div class="a" style="left:797px;top:31px;width:1px;height:628px;background:#3a3a3a"></div>
<div class="a" style="left:798px;top:31px;width:2px;height:628px;background:#555"></div>


<!-- panel content -->
<div class="t" style="left:568px;top:112px;font-size:9.5px;color:#d4d4d4">Mixed Objects</div>
<div class="a" style="left:559px;top:130px;width:228px;height:1px;background:#4a4a4a"></div>
<div class="t" style="left:568px;top:144px;font-size:9.5px;color:#cfcfcf">Transform</div>
<svg style="left:567px;top:173px" width="21" height="19" viewBox="0 0 21 19"><g fill="none" stroke="#d4d4d4" stroke-width="0.9"><rect x="0.8" y="0.8" width="4.6" height="4.6"/><rect x="8.2" y="0.8" width="4.6" height="4.6"/><rect x="15.6" y="0.8" width="4.6" height="4.6"/><rect x="0.8" y="7.2" width="4.6" height="4.6"/><rect x="15.6" y="7.2" width="4.6" height="4.6"/><rect x="0.8" y="13.6" width="4.6" height="4.6"/><rect x="8.2" y="13.6" width="4.6" height="4.6"/><rect x="15.6" y="13.6" width="4.6" height="4.6"/><path d="M5.4 3.1 H8.2 M12.8 3.1 H15.6 M5.4 15.9 H8.2 M12.8 15.9 H15.6 M3.1 5.4 V7.2 M3.1 11.8 V13.6 M17.9 5.4 V7.2 M17.9 11.8 V13.6 M5.4 9.5 H8.2 M12.8 9.5 H15.6"/></g><rect x="8" y="7" width="5" height="5" fill="#f0f0f0"/></svg>
<div class="t" style="left:597px;top:167px;font-size:10px;color:#c4c4c4">X:</div>
<div class="a" style="left:610px;top:161px;width:53px;height:19px;background:#464646;border:1px solid #5a5a5a;border-radius:2px"></div>
<div class="t" style="left:616px;top:166px;font-size:9.5px;color:#e6e6e6">2.7562 in</div>
<div class="t" style="left:597px;top:192px;font-size:10px;color:#c4c4c4">Y:</div>
<div class="a" style="left:610px;top:185px;width:53px;height:19px;background:#464646;border:1px solid #5a5a5a;border-radius:2px"></div>
<div class="t" style="left:616px;top:190px;font-size:9.5px;color:#e6e6e6">1.136 in</div>
<div class="t" style="left:678px;top:167px;font-size:10px;color:#c4c4c4">W:</div>
<div class="a" style="left:696px;top:161px;width:52px;height:19px;background:#464646;border:1px solid #5a5a5a;border-radius:2px"></div>
<div class="t" style="left:700px;top:166px;font-size:9.5px;color:#e6e6e6">0.5313 in</div>
<div class="t" style="left:678px;top:192px;font-size:10px;color:#c4c4c4">H:</div>
<div class="a" style="left:696px;top:185px;width:52px;height:19px;background:#464646;border:1px solid #5a5a5a;border-radius:2px"></div>
<div class="t" style="left:700px;top:190px;font-size:9.5px;color:#e6e6e6">0.9271 in</div>
<div class="a" style="left:758px;top:172px;width:23px;height:22px;background:#323232;border-radius:2px"></div>
<svg style="left:764px;top:175px" width="11" height="17" viewBox="0 0 11 17"><rect x="2.2" y="1.3" width="6" height="8.6" rx="3" fill="none" stroke="#f2f2f2" stroke-width="1.7"/><path d="M2.2 9 L2.2 10.5" stroke="#323232" stroke-width="2.4"/><rect x="2.4" y="6.6" width="6" height="9" rx="3" fill="none" stroke="#f2f2f2" stroke-width="1.7"/><path d="M8.4 7.5 L8.4 6" stroke="#323232" stroke-width="2.4"/><path d="M8.2 3.5 V8" stroke="#f2f2f2" stroke-width="1.7"/></svg>
<svg style="left:591px;top:213px" width="14" height="10" viewBox="0 0 14 10"><path d="M1 9 L8.5 1.2 M1 9 H11" fill="none" stroke="#cfcfcf" stroke-width="1.2"/><path d="M5.5 4.5 C7 5.5 7.5 7 7.5 9" fill="none" stroke="#cfcfcf" stroke-width="0.9"/><circle cx="12.8" cy="5" r="0.7" fill="#cfcfcf"/><circle cx="12.8" cy="8" r="0.7" fill="#cfcfcf"/></svg>
<div class="a" style="left:609px;top:211px;width:52px;height:18px;background:#464646;border:1px solid #5a5a5a;border-radius:2px"></div>
<div class="a" style="left:644px;top:211px;width:1px;height:18px;background:#535353"></div>
<div class="t" style="left:614px;top:215px;font-size:9.5px;color:#e6e6e6">0°</div>
<svg style="left:648px;top:217px" width="8" height="5" viewBox="0 0 8 5"><path d="M0.6 0.6 L4 4 L7.4 0.6" fill="none" stroke="#f0f0f0" stroke-width="1.5"/></svg>
<svg style="left:702px;top:215px" width="14" height="11" viewBox="0 0 14 11"><path d="M0.8 1 L5.5 5.5 L0.8 10 Z" fill="none" stroke="#cfcfcf" stroke-width="1"/><path d="M13.2 1 L8.5 5.5 L13.2 10 Z" fill="#cfcfcf"/><path d="M7 0 V11" stroke="#cfcfcf" stroke-width="0.8" stroke-dasharray="1.2 1"/></svg>
<svg style="left:725px;top:214px" width="12" height="14" viewBox="0 0 12 14"><path d="M1 0.8 H11 L6 5.5 Z" fill="#cfcfcf"/><path d="M1 13.2 H11 L6 8.5 Z" fill="none" stroke="#cfcfcf" stroke-width="1"/><path d="M0 7 H12" stroke="#cfcfcf" stroke-width="0.8" stroke-dasharray="1.2 1"/></svg>
<svg style="left:765px;top:238px" width="14" height="4" viewBox="0 0 14 4"><circle cx="2" cy="2" r="1.5" fill="#d8d8d8"/><circle cx="7" cy="2" r="1.5" fill="#d8d8d8"/><circle cx="12" cy="2" r="1.5" fill="#d8d8d8"/></svg>
<div class="a" style="left:559px;top:248px;width:228px;height:2px;background:#4a4a4a"></div>

<!-- Appearance -->
<div class="t" style="left:568px;top:263px;font-size:9.5px;color:#cfcfcf">Appearance</div>
<div class="a" style="left:568px;top:285px;width:18px;height:17px;background:#424242;border:1px solid #6a6a6a"></div>
<div class="t" style="left:573px;top:288px;font-size:11px;font-weight:bold;color:#ececec">?</div>
<div class="t" style="left:597px;top:290px;font-size:9.5px;color:#d8d8d8">Fill</div>
<div class="a" style="left:568px;top:312px;width:18px;height:18px;background:#f4f4f4;border:1px solid #3a3a3a"></div>
<div class="a" style="left:572px;top:316px;width:10px;height:10px;border:2px solid #111"></div>
<svg style="left:568px;top:312px" width="18" height="18" viewBox="0 0 18 18"><path d="M1.5 16.5 L16.5 1.5" stroke="#e0161b" stroke-width="2"/></svg>
<div class="t" style="left:597px;top:317px;font-size:9.5px;font-weight:bold;color:#e6e6e6;letter-spacing:-0.2px">Stroke</div>
<div class="a" style="left:597px;top:328px;width:27px;height:1px;background:repeating-linear-gradient(90deg,#c8c8c8 0 1px,transparent 1px 2px)"></div>
<div class="a" style="left:644px;top:312px;width:17px;height:18px;background:#494949;border:1px solid #4f4f4f"></div>
<svg style="left:648px;top:314px" width="9" height="14" viewBox="0 0 9 14"><path d="M1 4.5 L4.5 1 L8 4.5 M1 9.5 L4.5 13 L8 9.5" fill="none" stroke="#f0f0f0" stroke-width="1.3"/></svg>
<div class="a" style="left:661px;top:312px;width:31px;height:18px;background:#454545;border:1px solid #4c4c4c"></div>
<div class="a" style="left:692px;top:312px;width:17px;height:18px;background:#494949;border:1px solid #4f4f4f"></div>
<svg style="left:696px;top:319px" width="8" height="5" viewBox="0 0 8 5"><path d="M0.6 0.6 L4 4 L7.4 0.6" fill="none" stroke="#f0f0f0" stroke-width="1.5"/></svg>
<svg style="left:568px;top:340px" width="18" height="17" viewBox="0 0 18 17"><rect x="1" y="1" width="16" height="15" fill="#5a5a5a" stroke="#a8a8a8" stroke-width="1"/><g fill="#6a6a6a"><rect x="3" y="3" width="4" height="4"/><rect x="11" y="3" width="4" height="4"/><rect x="7" y="7" width="4" height="3"/><rect x="3" y="10" width="4" height="4"/><rect x="11" y="10" width="4" height="4"/></g></svg>
<div class="t" style="left:597px;top:344px;font-size:9.5px;font-weight:bold;color:#e6e6e6;letter-spacing:-0.2px">Opacity</div>
<div class="a" style="left:597px;top:355px;width:31px;height:1px;background:repeating-linear-gradient(90deg,#c8c8c8 0 1px,transparent 1px 2px)"></div>
<div class="a" style="left:644px;top:339px;width:48px;height:19px;background:#454545;border:1px solid #4c4c4c"></div>
<div class="t" style="left:648px;top:343px;font-size:9.5px;color:#e6e6e6">100%</div>
<div class="a" style="left:692px;top:339px;width:17px;height:19px;background:#494949;border:1px solid #4f4f4f"></div>
<svg style="left:698px;top:345px" width="5" height="8" viewBox="0 0 5 8"><path d="M0.6 0.6 L4 4 L0.6 7.4" fill="none" stroke="#f0f0f0" stroke-width="1.5"/></svg>
<div class="t" style="left:565px;top:375px;font-family:'Liberation Serif',serif;font-style:italic;font-size:13px;color:#bdbdbd">fx.</div>
<svg style="left:760px;top:402px" width="14" height="4" viewBox="0 0 14 4"><circle cx="2" cy="2" r="1.5" fill="#d8d8d8"/><circle cx="7" cy="2" r="1.5" fill="#d8d8d8"/><circle cx="12" cy="2" r="1.5" fill="#d8d8d8"/></svg>
<div class="a" style="left:559px;top:410px;width:228px;height:2px;background:#4a4a4a"></div>

<!-- Align -->
<div class="t" style="left:568px;top:426px;font-size:9.5px;color:#cfcfcf">Align</div>
<svg style="left:570px;top:450px" width="200" height="18" viewBox="0 0 200 18">
<g fill="#d4d4d4">
<rect x="2.5" y="2.5" width="12" height="12" fill="none" stroke="#d4d4d4" stroke-width="1.3" stroke-dasharray="1.8 1.2"/>
<rect x="7.5" y="7.5" width="2" height="2"/>
<path d="M18 7 L21 10 L24 7" fill="none" stroke="#d4d4d4" stroke-width="1.1"/>
<rect x="36.5" y="1" width="1.2" height="16"/><rect x="38.5" y="3.5" width="7" height="4.5"/><rect x="38.5" y="10" width="12" height="4.5"/>
<rect x="72.3" y="1" width="1.2" height="16"/><rect x="69.5" y="3.5" width="7" height="4.5"/><rect x="67" y="10" width="12" height="4.5"/>
<rect x="109" y="1" width="1.2" height="16"/><rect x="101.5" y="3.5" width="7" height="4.5"/><rect x="96.5" y="10" width="12" height="4.5"/>
<rect x="122.5" y="1" width="16" height="1.2"/><rect x="125" y="3" width="4.5" height="12"/><rect x="131.5" y="3" width="4.5" height="7"/>
<rect x="151" y="8.5" width="17" height="1.2"/><rect x="153.5" y="3" width="4.5" height="12"/><rect x="160.5" y="5.5" width="4.5" height="7"/>
<rect x="179" y="16" width="17" height="1.2"/><rect x="181.5" y="3" width="4.5" height="12"/><rect x="188.5" y="8" width="4.5" height="7"/>
</g></svg>
<svg style="left:765px;top:482px" width="14" height="4" viewBox="0 0 14 4"><circle cx="2" cy="2" r="1.5" fill="#d8d8d8"/><circle cx="7" cy="2" r="1.5" fill="#d8d8d8"/><circle cx="12" cy="2" r="1.5" fill="#d8d8d8"/></svg>
<div class="a" style="left:559px;top:491px;width:228px;height:2px;background:#4a4a4a"></div>

<!-- Pathfinder -->
<div class="t" style="left:568px;top:507px;font-size:9.5px;color:#cfcfcf">Pathfinder</div>
<svg style="left:572px;top:531px" width="110" height="17" viewBox="0 0 110 17">
<rect x="1.5" y="1" width="9" height="9" fill="#d4d4d4"/><rect x="6" y="5.5" width="9.5" height="9.5" fill="#d4d4d4"/>
<rect x="31.5" y="1" width="9" height="9" fill="#d4d4d4"/><rect x="35.5" y="5" width="9.5" height="9.5" fill="#535353" stroke="#d4d4d4" stroke-width="1.2"/>
<rect x="60.5" y="1" width="9" height="9" fill="none" stroke="#d4d4d4" stroke-width="1.2"/><rect x="64.5" y="5" width="9.5" height="9.5" fill="none" stroke="#d4d4d4" stroke-width="1.2"/><rect x="64.5" y="5" width="5" height="5" fill="#d4d4d4"/>
<rect x="90.5" y="1" width="9" height="9" fill="#d4d4d4"/><rect x="94.5" y="5" width="9.5" height="9.5" fill="#d4d4d4"/><rect x="94.5" y="5" width="5" height="5" fill="#535353"/>
</svg>
<div class="a" style="left:723px;top:523px;width:58px;height:20px;background:#575757;border-radius:2px"></div>
<div class="t" style="left:737px;top:528px;font-size:9.5px;color:#7c7c7c">Expand</div>
<svg style="left:765px;top:552px" width="14" height="4" viewBox="0 0 14 4"><circle cx="2" cy="2" r="1.5" fill="#d8d8d8"/><circle cx="7" cy="2" r="1.5" fill="#d8d8d8"/><circle cx="12" cy="2" r="1.5" fill="#d8d8d8"/></svg>
<div class="a" style="left:559px;top:562px;width:228px;height:2px;background:#4a4a4a"></div>

<!-- Quick actions -->
<div class="t" style="left:568px;top:583px;font-size:9.5px;color:#cfcfcf">Quick Actions</div>
<div class="a" style="left:568px;top:603px;width:104px;height:20px;border:1px solid #6c6c6c;border-radius:3px"></div>
<div class="t" style="left:607.5px;top:609px;font-size:10px;color:#ececec;-webkit-text-stroke:0.35px #ececec;letter-spacing:-0.25px">Group</div>
<div class="a" style="left:681px;top:603px;width:104px;height:20px;border:1px solid #6c6c6c;border-radius:3px"></div>
<div class="t" style="left:717.5px;top:609px;font-size:10px;color:#ececec;-webkit-text-stroke:0.35px #ececec;letter-spacing:-0.25px">Recolor</div>
<div class="a" style="left:568px;top:633px;width:217px;height:20px;border:1px solid #6c6c6c;border-radius:3px"></div>
<div class="t" style="left:634.5px;top:639px;font-size:10px;color:#ececec;-webkit-text-stroke:0.35px #ececec;letter-spacing:-0.35px">Make Clipping Mask</div>

<!-- panel scrollbar -->
<div class="a" style="left:787px;top:99px;width:10px;height:560px;background:#4b4b4b"></div>
<svg style="left:788px;top:104px" width="8" height="5" viewBox="0 0 8 5"><path d="M0.6 4.4 L4 1 L7.4 4.4" fill="none" stroke="#a8a8a8" stroke-width="1.2"/></svg>
<div class="a" style="left:787px;top:112px;width:9px;height:520px;background:#5d5d5d;border-radius:4px 4px 0 0"></div>

</body></html>
